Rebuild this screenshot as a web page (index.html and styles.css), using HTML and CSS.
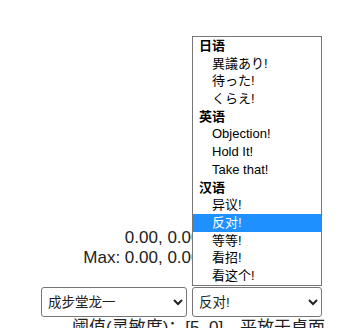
FILE: index.html
```html
<!DOCTYPE html>
<html lang="zh">
<head>
  <meta charset="UTF-8">
  <meta name="viewport" content="width=device-width, initial-scale=1.0">
  <title>异议!</title>
  <link rel="stylesheet" href="styles.css">
</head>
<body>
  <div class="readout">
    <div>0.00, 0.00, 0.00</div>
    <div>Max: 0.00, 0.00, 0.00</div>
  </div>

  <div class="controls">
    <select class="picker picker-char">
      <option>成步堂龙一</option>
      <option>御剑怜侍</option>
    </select>
    <select class="picker picker-phrase">
      <option>反对!</option>
    </select>
  </div>

  <div class="hint">阈值(灵敏度)：[5, 0]，平放于桌面</div>

  <!-- open dropdown of the phrase picker -->
  <div class="popup">
    <div class="group">日语</div>
    <div class="opt">異議あり!</div>
    <div class="opt">待った!</div>
    <div class="opt">くらえ!</div>
    <div class="group">英语</div>
    <div class="opt">Objection!</div>
    <div class="opt">Hold It!</div>
    <div class="opt">Take that!</div>
    <div class="group">汉语</div>
    <div class="opt">异议!</div>
    <div class="opt selected">反对!</div>
    <div class="opt">等等!</div>
    <div class="opt">看招!</div>
    <div class="opt">看这个!</div>
  </div>
</body>
</html>
```

FILE: styles.css
```css
body {
  margin: 0;
  font-family: 'Liberation Sans', 'Noto Sans CJK SC', sans-serif;
  color: #222;
  background: white;
  overflow: hidden;
  position: relative;
  height: 328px;
}

.readout {
  width: 243px;
  margin-top: 228px;
  text-align: right;
  font-size: 17px;
  line-height: 20px;
}

.controls {
  display: flex;
  gap: 5px;
  margin: 19px 0 0 41px;
}

.picker {
  height: 30px;
  font-family: 'Liberation Sans', 'Noto Sans CJK SC', sans-serif;
  font-size: 13.5px;
  color: #222;
  border: 1px solid #767676;
  border-radius: 3px;
  background: white;
  padding: 0 2px;
}

.picker-char {
  width: 146px;
}

.picker-phrase {
  width: 130px;
}

.hint {
  margin: 1px 0 0 72px;
  font-size: 17px;
  line-height: 20px;
  white-space: nowrap;
}

.popup {
  position: absolute;
  left: 192px;
  top: 36px;
  width: 128px;
  height: 248px;
  border: 1px solid #767676;
  background: white;
  font-size: 13px;
  color: #000;
}

.group,
.opt {
  height: 17.7px;
  line-height: 17.7px;
  white-space: nowrap;
}

.group {
  padding-left: 6px;
  font-weight: bold;
}

.opt {
  padding-left: 19px;
}

.opt.selected {
  background: #1e90ff;
  color: white;
}
```
